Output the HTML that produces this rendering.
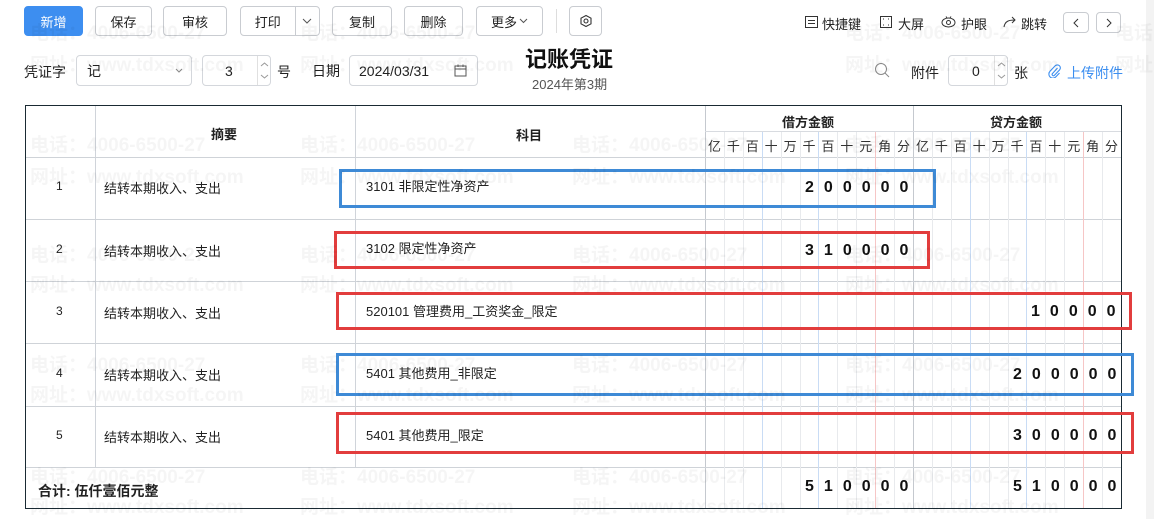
<!DOCTYPE html>
<html><head><meta charset="utf-8"><style>
*{box-sizing:border-box;margin:0;padding:0}
body{width:1154px;height:519px;overflow:hidden;background:#fff;font-family:"Liberation Sans","Noto Sans CJK SC",sans-serif;color:#222;position:relative;font-size:13px}
.a{position:absolute}
.btn{position:absolute;top:6px;height:30px;border:1px solid #c9ccd1;border-radius:4px;background:#fff;font-size:13px;display:flex;align-items:center;justify-content:center;color:#222}
.inp{position:absolute;height:31px;border:1px solid #d4d7dc;border-radius:4px;background:#fff;font-size:14px;display:flex;align-items:center}
.vl{position:absolute;width:1px;background:#e8eaed}
.hl{position:absolute;height:1px;background:#cfd3d8}
.amt{position:absolute;display:flex;font-weight:bold;font-size:16px;color:#111}
.amt span{width:18.91px;text-align:center}
.hd span{font-weight:normal;font-size:13px;color:#333}
.box{position:absolute;border:3px solid}
.wm{position:absolute;color:rgba(0,0,0,0.04);font-size:19px;font-weight:bold;white-space:nowrap;pointer-events:none}
.t{position:absolute;font-size:13px;white-space:nowrap}
.sp{position:absolute}
</style></head><body>
<div class="a" style="left:1146px;top:0;width:8px;height:519px;background:#f3f3f3"></div>

<div class="btn" style="left:24px;width:59px;background:#3d8ef0;border-color:#3d8ef0;color:#fff">新增</div>
<div class="btn" style="left:95px;width:57px">保存</div>
<div class="btn" style="left:163px;width:64px">审核</div>
<div class="btn" style="left:240px;width:80px;justify-content:flex-start"><span style="width:55px;text-align:center">打印</span><span style="width:1px;height:28px;background:#c9ccd1"></span><span style="width:24px;display:flex;justify-content:center"><svg width="10" height="6" viewBox="0 0 10 6"><path d="M1 1l4 4 4-4" fill="none" stroke="#555"/></svg></span></div>
<div class="btn" style="left:332px;width:60px">复制</div>
<div class="btn" style="left:404px;width:59px">删除</div>
<div class="btn" style="left:476px;width:67px">更多<svg style="margin-left:2px" width="9" height="6" viewBox="0 0 9 6"><path d="M1 1l3.5 3.5L8 1" fill="none" stroke="#555"/></svg></div>
<div class="a" style="left:556px;top:9px;width:1px;height:24px;background:#ddd"></div>
<div class="btn" style="left:569px;width:33px"><svg width="14" height="14" viewBox="0 0 14 14"><path d="M7 1.5 L12 4.2 L12 9.8 L7 12.5 L2 9.8 L2 4.2Z" fill="none" stroke="#333" stroke-width="1.1"/><circle cx="7" cy="7" r="2" fill="none" stroke="#333" stroke-width="1.1"/></svg></div>

<div class="t" style="left:24px;top:62px;font-size:14px">凭证字</div>
<div class="inp" style="left:76px;top:55px;width:116px;padding-left:10px">记<svg style="position:absolute;right:8px;top:12px" width="8" height="5" viewBox="0 0 8 5"><path d="M1 1l3 3 3-3" fill="none" stroke="#888"/></svg></div>
<div class="inp" style="left:202px;top:55px;width:69px"><span style="position:absolute;left:22px">3</span><span style="position:absolute;left:54px;top:0;width:1px;height:29px;background:#e0e0e0"></span><svg class="sp" style="left:57px;top:6px" width="9" height="5" viewBox="0 0 9 5"><path d="M1 4l3.5-3L8 4" fill="none" stroke="#999"/></svg><svg class="sp" style="left:57px;top:18px" width="9" height="5" viewBox="0 0 9 5"><path d="M1 1l3.5 3L8 1" fill="none" stroke="#999"/></svg></div>
<div class="t" style="left:277px;top:62px;font-size:14px">号</div>
<div class="t" style="left:312px;top:61px;font-size:14px">日期</div>
<div class="inp" style="left:349px;top:55px;width:129px;padding-left:9px">2024/03/31<svg style="position:absolute;right:10px" width="13" height="13" viewBox="0 0 13 13"><rect x="1" y="2" width="11" height="10" fill="none" stroke="#555"/><path d="M1 5H12M4 0.5V3M9 0.5V3" stroke="#555"/></svg></div>
<div class="t" style="left:525px;top:42px;font-size:22px;font-weight:bold;color:#111">记账凭证</div>
<div class="t" style="left:532px;top:74px;font-size:13px;color:#555">2024年第3期</div>

<svg class="a" style="left:805px;top:16px" width="13" height="12" viewBox="0 0 13 12"><rect x="0.5" y="0.5" width="12" height="11" fill="none" stroke="#333"/><path d="M3 4.5H10M3 7.5H10" stroke="#333"/></svg>
<div class="t" style="left:822px;top:14px">快捷键</div>
<svg class="a" style="left:880px;top:16px" width="12" height="12" viewBox="0 0 12 12"><rect x="0.5" y="0.5" width="11" height="11" fill="none" stroke="#333"/><path d="M3 3h1M8 3h1M3 9h1M8 9h1" stroke="#333"/></svg>
<div class="t" style="left:898px;top:14px">大屏</div>
<svg class="a" style="left:941px;top:15px" width="15" height="13" viewBox="0 0 15 13"><ellipse cx="7.5" cy="7.5" rx="6.5" ry="4.5" fill="none" stroke="#333"/><circle cx="7.5" cy="7.5" r="2" fill="none" stroke="#333"/><path d="M5 1.5l1 1.5M10 1.5l-1 1.5" stroke="#333"/></svg>
<div class="t" style="left:961px;top:14px">护眼</div>
<svg class="a" style="left:1003px;top:16px" width="14" height="12" viewBox="0 0 14 12"><path d="M1 11 C2 5 6 4 12 4 M9 1 L12 4 L9 7" fill="none" stroke="#333"/></svg>
<div class="t" style="left:1021px;top:14px">跳转</div>
<div class="btn" style="left:1063px;top:12px;width:26px;height:21px"><svg width="6" height="10" viewBox="0 0 6 10"><path d="M5 1L1 5l4 4" fill="none" stroke="#333"/></svg></div>
<div class="btn" style="left:1096px;top:12px;width:25px;height:21px"><svg width="6" height="10" viewBox="0 0 6 10"><path d="M1 1l4 4-4 4" fill="none" stroke="#333"/></svg></div>

<svg class="a" style="left:874px;top:62px" width="16" height="16" viewBox="0 0 16 16"><circle cx="7" cy="7" r="5.5" fill="none" stroke="#888"/><path d="M11 11l4 4" stroke="#888"/></svg>
<div class="t" style="left:911px;top:63px;font-size:14px">附件</div>
<div class="inp" style="left:948px;top:55px;width:60px"><span style="position:absolute;left:23px">0</span><span style="position:absolute;left:45px;top:0;width:1px;height:29px;background:#e0e0e0"></span><svg class="sp" style="left:48px;top:6px" width="9" height="5" viewBox="0 0 9 5"><path d="M1 4l3.5-3L8 4" fill="none" stroke="#999"/></svg><svg class="sp" style="left:48px;top:18px" width="9" height="5" viewBox="0 0 9 5"><path d="M1 1l3.5 3L8 1" fill="none" stroke="#999"/></svg></div>
<div class="t" style="left:1014px;top:63px;font-size:14px">张</div>
<svg class="a" style="left:1048px;top:64px" width="13" height="14" viewBox="0 0 13 14"><path d="M9.5 4 L4.5 9.5 a1.3 1.3 0 0 0 2 1.8 L11.5 6 a3 3 0 0 0 -4.3 -4.2 L2 7.3 a4 4 0 0 0 5.8 5.6 L11.5 9" fill="none" stroke="#3b8ef0" stroke-width="1.1"/></svg>
<div class="t" style="left:1067px;top:63px;color:#3b8ef0;font-size:14px">上传附件</div>

<!-- table -->
<div class="a" style="left:25px;top:105px;width:1097px;height:404px;border:1px solid #1a2a33"></div>
<div class="a" style="left:95px;top:106px;width:1px;height:362px;background:#d0d4da"></div>
<div class="a" style="left:355px;top:106px;width:1px;height:362px;background:#d0d4da"></div>
<div class="a" style="left:705px;top:106px;width:1px;height:402px;background:#c5c9cf"></div>
<div class="a" style="left:913px;top:106px;width:1px;height:402px;background:#c5c9cf"></div>
<div class="hl" style="left:705px;top:131px;width:416px;background:#d8dbe0"></div>
<div class="hl" style="left:26px;top:157px;width:1095px"></div>
<div class="hl" style="left:26px;top:219px;width:1095px"></div>
<div class="hl" style="left:26px;top:281px;width:1095px"></div>
<div class="hl" style="left:26px;top:343px;width:1095px"></div>
<div class="hl" style="left:26px;top:406px;width:1095px"></div>
<div class="hl" style="left:26px;top:467px;width:1095px"></div>

<div class="vl" style="left:724px;top:132px;height:376px"></div>
<div class="vl" style="left:743px;top:132px;height:376px"></div>
<div class="vl" style="left:762px;top:132px;height:376px;background:#c9dcf5"></div>
<div class="vl" style="left:781px;top:132px;height:376px"></div>
<div class="vl" style="left:800px;top:132px;height:376px"></div>
<div class="vl" style="left:818px;top:132px;height:376px;background:#c9dcf5"></div>
<div class="vl" style="left:837px;top:132px;height:376px"></div>
<div class="vl" style="left:856px;top:132px;height:376px"></div>
<div class="vl" style="left:875px;top:132px;height:376px;background:#f6c6c6"></div>
<div class="vl" style="left:894px;top:132px;height:376px"></div>
<div class="vl" style="left:932px;top:132px;height:376px"></div>
<div class="vl" style="left:951px;top:132px;height:376px"></div>
<div class="vl" style="left:970px;top:132px;height:376px;background:#c9dcf5"></div>
<div class="vl" style="left:989px;top:132px;height:376px"></div>
<div class="vl" style="left:1008px;top:132px;height:376px"></div>
<div class="vl" style="left:1026px;top:132px;height:376px;background:#c9dcf5"></div>
<div class="vl" style="left:1045px;top:132px;height:376px"></div>
<div class="vl" style="left:1064px;top:132px;height:376px"></div>
<div class="vl" style="left:1083px;top:132px;height:376px;background:#f6c6c6"></div>
<div class="vl" style="left:1102px;top:132px;height:376px"></div>

<div class="t" style="left:211px;top:124px;font-weight:bold">摘要</div>
<div class="t" style="left:516px;top:125px;font-weight:bold">科目</div>
<div class="t" style="left:782px;top:112px;font-weight:bold">借方金额</div>
<div class="t" style="left:990px;top:112px;font-weight:bold">贷方金额</div>
<div class="amt hd" style="left:705px;top:136px"><span>亿</span><span>千</span><span>百</span><span>十</span><span>万</span><span>千</span><span>百</span><span>十</span><span>元</span><span>角</span><span>分</span></div>
<div class="amt hd" style="left:913px;top:136px"><span>亿</span><span>千</span><span>百</span><span>十</span><span>万</span><span>千</span><span>百</span><span>十</span><span>元</span><span>角</span><span>分</span></div>

<div class="t" style="left:56px;top:179px;font-size:12px">1</div>
<div class="t" style="left:56px;top:242px;font-size:12px">2</div>
<div class="t" style="left:56px;top:304px;font-size:12px">3</div>
<div class="t" style="left:56px;top:366px;font-size:12px">4</div>
<div class="t" style="left:56px;top:428px;font-size:12px">5</div>
<div class="t" style="left:104px;top:178px">结转本期收入、支出</div>
<div class="t" style="left:104px;top:241px">结转本期收入、支出</div>
<div class="t" style="left:104px;top:303px">结转本期收入、支出</div>
<div class="t" style="left:104px;top:365px">结转本期收入、支出</div>
<div class="t" style="left:104px;top:427px">结转本期收入、支出</div>
<div class="t" style="left:366px;top:176px">3101 非限定性净资产</div>
<div class="t" style="left:366px;top:238px">3102 限定性净资产</div>
<div class="t" style="left:366px;top:301px">520101 管理费用_工资奖金_限定</div>
<div class="t" style="left:366px;top:363px">5401 其他费用_非限定</div>
<div class="t" style="left:366px;top:425px">5401 其他费用_限定</div>

<div class="amt" style="left:800px;top:179px"><span>2</span><span>0</span><span>0</span><span>0</span><span>0</span><span>0</span></div>
<div class="amt" style="left:800px;top:242px"><span>3</span><span>1</span><span>0</span><span>0</span><span>0</span><span>0</span></div>
<div class="amt" style="left:1026px;top:303px"><span>1</span><span>0</span><span>0</span><span>0</span><span>0</span></div>
<div class="amt" style="left:1008px;top:366px"><span>2</span><span>0</span><span>0</span><span>0</span><span>0</span><span>0</span></div>
<div class="amt" style="left:1008px;top:427px"><span>3</span><span>0</span><span>0</span><span>0</span><span>0</span><span>0</span></div>
<div class="amt" style="left:800px;top:478px"><span>5</span><span>1</span><span>0</span><span>0</span><span>0</span><span>0</span></div>
<div class="amt" style="left:1008px;top:478px"><span>5</span><span>1</span><span>0</span><span>0</span><span>0</span><span>0</span></div>
<div class="t" style="left:38px;top:481px;font-weight:bold;font-size:14px">合计: 伍仟壹佰元整</div>

<div class="box" style="left:339px;top:169px;width:597px;height:39px;border-color:#3e8ad6"></div>
<div class="box" style="left:334px;top:231px;width:596px;height:38px;border-color:#e23d3d"></div>
<div class="box" style="left:336px;top:292px;width:796px;height:38px;border-color:#e23d3d"></div>
<div class="box" style="left:336px;top:353px;width:798px;height:43px;border-color:#3e8ad6"></div>
<div class="box" style="left:336px;top:412px;width:798px;height:42px;border-color:#e23d3d"></div>

<!-- watermark -->
<div class="wm" style="left:30px;top:18px">电话：4006-6500-27</div><div class="wm" style="left:30px;top:50px">网址：www.tdxsoft.com</div>
<div class="wm" style="left:300px;top:18px">电话：4006-6500-27</div><div class="wm" style="left:300px;top:50px">网址：www.tdxsoft.com</div>
<div class="wm" style="left:845px;top:18px">电话：4006-6500-27</div><div class="wm" style="left:845px;top:50px">网址：www.tdxsoft.com</div>
<div class="wm" style="left:1115px;top:18px">电话</div><div class="wm" style="left:1115px;top:50px">网址</div>
<div class="wm" style="left:30px;top:130px">电话：4006-6500-27</div><div class="wm" style="left:30px;top:162px">网址：www.tdxsoft.com</div>
<div class="wm" style="left:300px;top:130px">电话：4006-6500-27</div><div class="wm" style="left:300px;top:162px">网址：www.tdxsoft.com</div>
<div class="wm" style="left:572px;top:130px">电话：4006-6500-27</div><div class="wm" style="left:572px;top:162px">网址：www.tdxsoft.com</div>
<div class="wm" style="left:845px;top:130px">电话：4006-6500-27</div><div class="wm" style="left:845px;top:162px">网址：www.tdxsoft.com</div>
<div class="wm" style="left:30px;top:240px">电话：4006-6500-27</div><div class="wm" style="left:30px;top:270px">网址：www.tdxsoft.com</div>
<div class="wm" style="left:300px;top:240px">电话：4006-6500-27</div><div class="wm" style="left:300px;top:270px">网址：www.tdxsoft.com</div>
<div class="wm" style="left:572px;top:240px">电话：4006-6500-27</div><div class="wm" style="left:572px;top:270px">网址：www.tdxsoft.com</div>
<div class="wm" style="left:845px;top:240px">电话：4006-6500-27</div><div class="wm" style="left:845px;top:270px">网址：www.tdxsoft.com</div>
<div class="wm" style="left:30px;top:350px">电话：4006-6500-27</div><div class="wm" style="left:30px;top:380px">网址：www.tdxsoft.com</div>
<div class="wm" style="left:300px;top:350px">电话：4006-6500-27</div><div class="wm" style="left:300px;top:380px">网址：www.tdxsoft.com</div>
<div class="wm" style="left:572px;top:350px">电话：4006-6500-27</div><div class="wm" style="left:572px;top:380px">网址：www.tdxsoft.com</div>
<div class="wm" style="left:845px;top:350px">电话：4006-6500-27</div><div class="wm" style="left:845px;top:380px">网址：www.tdxsoft.com</div>
<div class="wm" style="left:30px;top:462px">电话：4006-6500-27</div><div class="wm" style="left:30px;top:492px">网址：www.tdxsoft.com</div>
<div class="wm" style="left:300px;top:462px">电话：4006-6500-27</div><div class="wm" style="left:300px;top:492px">网址：www.tdxsoft.com</div>
<div class="wm" style="left:572px;top:462px">电话：4006-6500-27</div><div class="wm" style="left:572px;top:492px">网址：www.tdxsoft.com</div>
<div class="wm" style="left:845px;top:462px">电话：4006-6500-27</div><div class="wm" style="left:845px;top:492px">网址：www.tdxsoft.com</div>
</body></html>
